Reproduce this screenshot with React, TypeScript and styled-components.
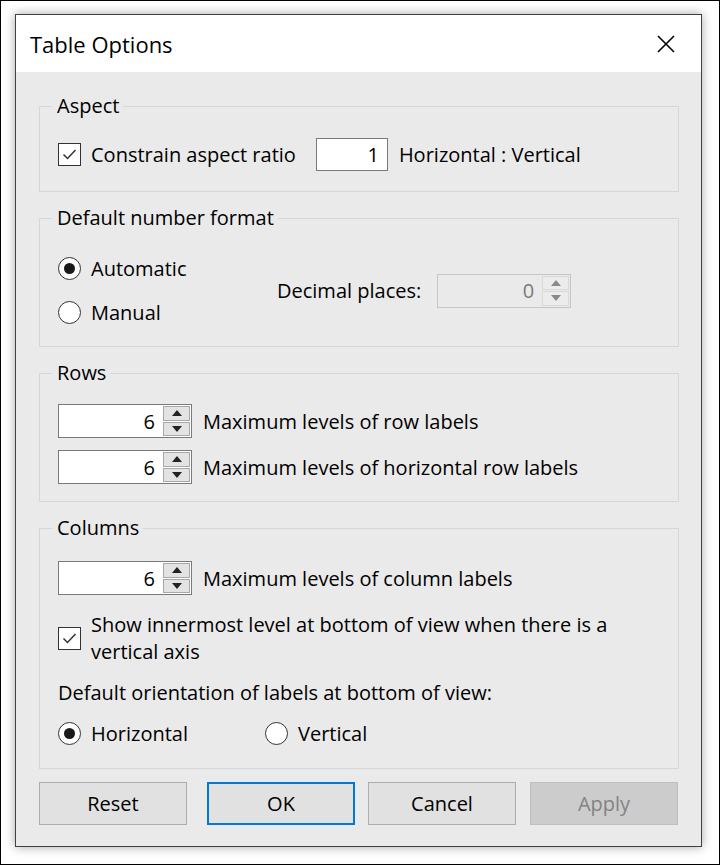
import React from "react";
import styled, { createGlobalStyle } from "styled-components";

const GlobalStyle = createGlobalStyle`
  body {
    margin: 0;
    background: #ffffff;
    font-family: "Open Sans", "Noto Sans", sans-serif;
  }
`;

const Frame = styled.div`
  width: 720px;
  height: 865px;
  box-sizing: border-box;
  border: 1px solid #000;
  background: #fff;
  padding: 13px 0 0 14px;
`;

const Dialog = styled.div`
  width: 687px;
  height: 833px;
  box-sizing: border-box;
  border: 1px solid #404040;
  box-shadow: 0 0 10px rgba(0, 0, 0, 0.35);
  background: #eaeaea;
  display: flex;
  flex-direction: column;
  color: #000;
`;

const TitleBar = styled.div`
  height: 57px;
  background: #fff;
  display: flex;
  align-items: center;
  justify-content: space-between;
  padding: 0 26px 0 14px;
  font-size: 22px;
`;

const Body = styled.div`
  flex: 1;
  display: flex;
  flex-direction: column;
  gap: 14px;
  padding: 22px 22px 0 23px;
  font-size: 20px;
`;

const Group = styled.fieldset<{ $pt: number; $pb: number }>`
  margin: 0;
  border: 1px solid #d6d6d6;
  padding: ${(p) => p.$pt}px 18px ${(p) => p.$pb}px 18px;
  min-width: 0;
`;

const Legend = styled.legend`
  margin-left: -6px;
  padding: 0 4px 0 5px;
  line-height: 24px;
`;

const Row = styled.div<{ $gap?: number }>`
  display: flex;
  align-items: center;
  gap: ${(p) => p.$gap ?? 10}px;
`;

const Stack = styled.div<{ $gap: number }>`
  display: flex;
  flex-direction: column;
  gap: ${(p) => p.$gap}px;
`;

const Box = styled.span`
  width: 23px;
  height: 23px;
  box-sizing: border-box;
  border: 1.5px solid #333;
  background: #fff;
  flex-shrink: 0;
  display: flex;
  align-items: center;
  justify-content: center;
`;

const Radio = styled.span<{ $on?: boolean }>`
  width: 23px;
  height: 23px;
  box-sizing: border-box;
  border-radius: 50%;
  border: 1.5px solid #333;
  background: #fff;
  flex-shrink: 0;
  display: flex;
  align-items: center;
  justify-content: center;
  &::after {
    content: "";
    width: 11px;
    height: 11px;
    border-radius: 50%;
    background: ${(p) => (p.$on ? "#1a1a1a" : "transparent")};
  }
`;

const Label = styled.span`
  line-height: 27px;
`;

const TextBox = styled.div<{ $w: number }>`
  width: ${(p) => p.$w}px;
  height: 33px;
  box-sizing: border-box;
  border: 1px solid #7a7a7a;
  background: #fff;
  display: flex;
  align-items: center;
  justify-content: flex-end;
  padding-right: 8px;
`;

const Spinner = styled.div<{ $w: number; $off?: boolean }>`
  width: ${(p) => p.$w}px;
  height: 34px;
  box-sizing: border-box;
  border: 1px solid ${(p) => (p.$off ? "#c6c6c6" : "#7a7a7a")};
  background: ${(p) => (p.$off ? "#eaeaea" : "#fff")};
  color: ${(p) => (p.$off ? "#7a7a7a" : "#000")};
  display: flex;
  align-items: center;
  padding: 1px;
  flex-shrink: 0;
`;

const SpinValue = styled.span`
  flex: 1;
  text-align: right;
  padding-right: 8px;
`;

const SpinButtons = styled.div`
  width: 27px;
  height: 100%;
  display: flex;
  flex-direction: column;
`;

const SpinHalf = styled.div<{ $off?: boolean }>`
  flex: 1;
  box-sizing: border-box;
  border: 1px solid ${(p) => (p.$off ? "#d9d9d9" : "#a8a8a8")};
  background: ${(p) => (p.$off ? "#ececec" : "#e3e3e3")};
  display: flex;
  align-items: center;
  justify-content: center;
  & + & {
    margin-top: 1px;
  }
`;

const CheckRow = styled(Row)`
  margin-top: 2px;
`;

const Buttons = styled.div`
  display: flex;
  margin-top: -1px;
`;

const Button = styled.div<{ $primary?: boolean; $off?: boolean; $ml?: number }>`
  width: 148px;
  height: 43px;
  margin-left: ${(p) => p.$ml ?? 0}px;
  box-sizing: border-box;
  border: ${(p) =>
    p.$primary ? "2px solid #0078d7" : p.$off ? "1px solid #bfbfbf" : "1px solid #adadad"};
  background: ${(p) => (p.$off ? "#cccccc" : "#e1e1e1")};
  color: ${(p) => (p.$off ? "#838383" : "#000")};
  display: flex;
  align-items: center;
  justify-content: center;
`;

const Arrow = ({ up, off }: { up?: boolean; off?: boolean }) => (
  <svg width="10" height="6" viewBox="0 0 10 6">
    <path
      d={up ? "M0 6 L5 0 L10 6 Z" : "M0 0 L5 6 L10 0 Z"}
      fill={off ? "#8a8a8a" : "#222"}
    />
  </svg>
);

const Spin = ({ value, w, off }: { value: string; w: number; off?: boolean }) => (
  <Spinner $w={w} $off={off}>
    <SpinValue>{value}</SpinValue>
    <SpinButtons>
      <SpinHalf $off={off}>
        <Arrow up off={off} />
      </SpinHalf>
      <SpinHalf $off={off}>
        <Arrow off={off} />
      </SpinHalf>
    </SpinButtons>
  </Spinner>
);

const Check = () => (
  <Box>
    <svg width="17" height="17" viewBox="0 0 17 17">
      <polyline points="2.5,8.5 6.5,12.5 14.5,4" fill="none" stroke="#333" strokeWidth="1.5" />
    </svg>
  </Box>
);

const App: React.FC = () => {
  return (
    <Frame>
      <GlobalStyle />
      <Dialog>
        <TitleBar>
          <span>Table Options</span>
          <svg width="18" height="18" viewBox="0 0 18 18">
            <path d="M1 1 L17 17 M17 1 L1 17" stroke="#000" strokeWidth="1.6" />
          </svg>
        </TitleBar>

        <Body>
          <Group $pt={20} $pb={20}>
            <Legend>Aspect</Legend>
            <Row>
              <Check />
              <Label>Constrain aspect ratio</Label>
              <Row $gap={11} style={{ marginLeft: 10 }}>
                <TextBox $w={72}>1</TextBox>
                <Label>Horizontal : Vertical</Label>
              </Row>
            </Row>
          </Group>

          <Group $pt={25} $pb={20}>
            <Legend>Default number format</Legend>
            <Row $gap={0}>
              <Stack $gap={17} style={{ width: 219 }}>
                <Row>
                  <Radio $on />
                  <Label>Automatic</Label>
                </Row>
                <Row>
                  <Radio />
                  <Label>Manual</Label>
                </Row>
              </Stack>
              <Row $gap={16}>
                <Label>Decimal places:</Label>
                <Spin value="0" w={134} off />
              </Row>
            </Row>
          </Group>

          <Group $pt={19} $pb={17}>
            <Legend>Rows</Legend>
            <Stack $gap={12}>
              <Row $gap={11}>
                <Spin value="6" w={134} />
                <Label>Maximum levels of row labels</Label>
              </Row>
              <Row $gap={11}>
                <Spin value="6" w={134} />
                <Label>Maximum levels of horizontal row labels</Label>
              </Row>
            </Stack>
          </Group>

          <Group $pt={21} $pb={21}>
            <Legend>Columns</Legend>
            <Stack $gap={14}>
              <Row $gap={11}>
                <Spin value="6" w={134} />
                <Label>Maximum levels of column labels</Label>
              </Row>
              <CheckRow>
                <Check />
                <Label>
                  Show innermost level at bottom of view when there is a
                  <br />
                  vertical axis
                </Label>
              </CheckRow>
              <Label>Default orientation of labels at bottom of view:</Label>
              <Row $gap={0}>
                <Row style={{ width: 207 }}>
                  <Radio $on />
                  <Label>Horizontal</Label>
                </Row>
                <Row>
                  <Radio />
                  <Label>Vertical</Label>
                </Row>
              </Row>
            </Stack>
          </Group>

          <Buttons>
            <Button>Reset</Button>
            <Button $primary $ml={20}>
              OK
            </Button>
            <Button $ml={13}>Cancel</Button>
            <Button $off $ml={14}>
              Apply
            </Button>
          </Buttons>
        </Body>
      </Dialog>
    </Frame>
  );
};

export default App;
